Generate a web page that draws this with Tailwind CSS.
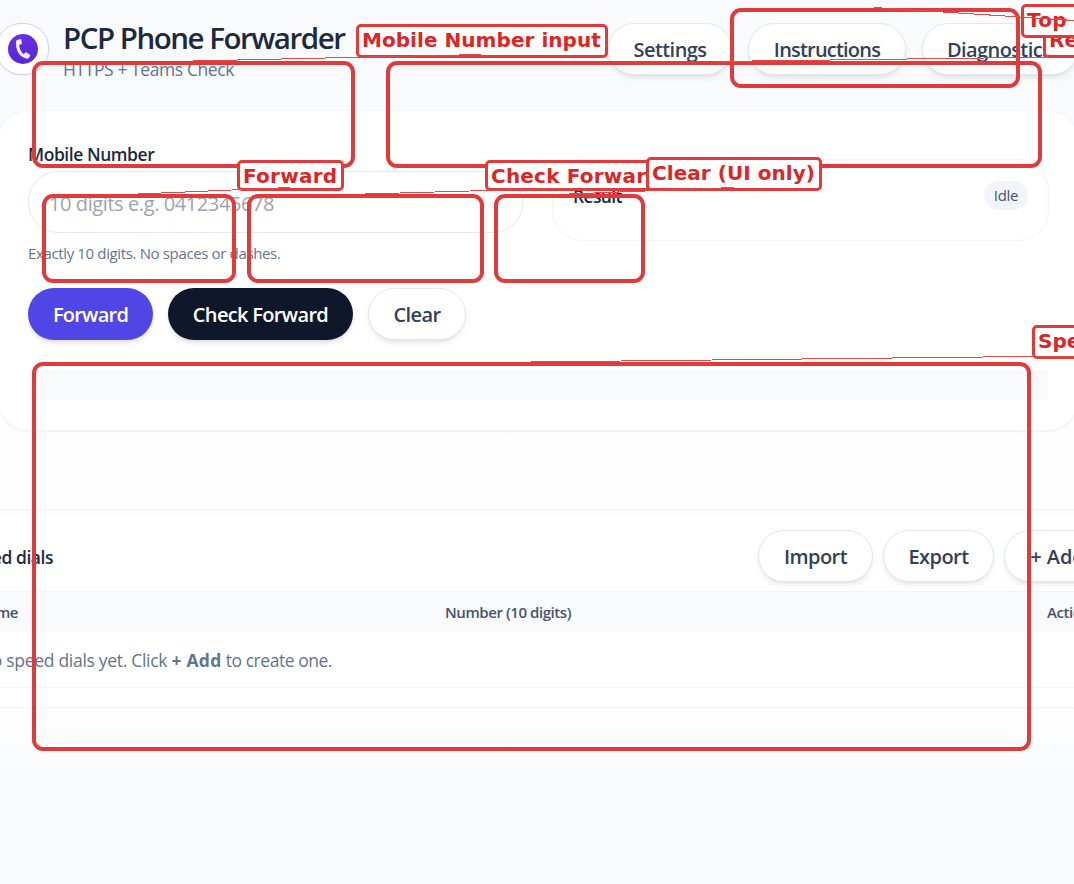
<!DOCTYPE html>
<html lang="en">
<head>
<meta charset="utf-8">
<title>PCP Phone Forwarder</title>
<script src="https://cdn.jsdelivr.net/npm/@tailwindcss/browser@4"></script>
</head>
<body class="relative h-[884px] w-[1074px] overflow-hidden bg-[linear-gradient(to_bottom,#f8fafc_0%,#f9fafc_12%,#fefefe_50%,#fefefe_76%,#fafbfd_88%)] font-['Open_Sans','Noto_Sans',sans-serif] text-slate-800">

<div class="h-full w-full overflow-hidden">
  <!-- Header -->
  <header class="-ml-1 mt-[23px] flex h-[52px] w-[1082px] justify-between">
    <div class="flex">
      <div class="flex size-[53px] h-[52px] shrink-0 items-center justify-center rounded-[25px] border border-[#c7d2fe] bg-white shadow-xs">
        <svg class="size-[30px]" viewBox="0 0 30 30">
          <defs><linearGradient id="g" x1="0" y1="0" x2="0" y2="1"><stop offset="0" stop-color="#6a30de"/><stop offset="1" stop-color="#5827d6"/></linearGradient></defs>
          <circle cx="15" cy="15" r="15" fill="url(#g)"/>
          <path d="M9.2 5.9 L12.4 5 Q13.1 4.9 13.3 5.6 L13.9 9.3 Q13.9 10 13.2 10.2 L11.2 10.8 Q11.2 16.2 15.6 20.2 L17.4 18.6 Q18 18.1 18.6 18.5 L21.9 20.8 Q22.5 21.3 22.1 21.9 L20.4 24.2 Q19.8 24.9 18.8 24.7 Q13.2 23.6 9.8 18 Q7.5 13.6 8 7.6 Q8.1 6.3 9.2 5.9 Z" fill="#f5efff"/>
        </svg>
      </div>
      <div class="ml-[14px] -mt-[5px]">
        <h1 class="pt-px text-[29.5px] leading-[37px] font-semibold tracking-[-1.47px] whitespace-nowrap">PCP Phone Forwarder</h1>
        <p class="text-[17.5px] leading-[27px] tracking-[-0.41px] text-slate-500">HTTPS + Teams Check</p>
      </div>
    </div>
    <nav class="flex gap-4 text-[20px] font-semibold text-slate-700">
      <button class="h-[52px] w-[124px] rounded-full border border-slate-200 bg-white pt-px tracking-[-0.55px] shadow-md shadow-black/8">Settings</button>
      <button class="h-[52px] w-[158px] rounded-full border border-slate-200 bg-white pt-px tracking-[-0.8px] shadow-md shadow-black/8">Instructions</button>
      <button class="h-[52px] w-[156px] rounded-full border border-slate-200 bg-white pt-px pl-[24px] text-left tracking-[-0.6px] shadow-md shadow-black/8">Diagnostics</button>
    </nav>
  </header>

  <!-- Main card -->
  <main class="-ml-[3px] mt-[35px] h-[321px] w-[1082px] rounded-[32px] border border-slate-100 bg-white p-[30px] shadow-xs">
    <div class="grid w-[1020px] grid-cols-2 items-start gap-[30px]">
      <div>
        <label class="block text-[17.5px] leading-[26px] font-semibold tracking-[-0.45px]">Mobile Number</label>
        <div class="mt-1 flex h-[62px] items-center rounded-[30px] border border-slate-200 pt-[4px] pl-[20px] text-[20px] tracking-[-0.41px] text-[#9ca3af]">10 digits e.g. 0412345678</div>
        <p class="mt-[10px] text-[15px] leading-[20px] tracking-[-0.36px] text-slate-500">Exactly 10 digits. No spaces or dashes.</p>
      </div>
      <section class="-ml-px mt-[18px] h-[82px] w-[497px] rounded-[30px] border border-slate-100 bg-white px-5 pt-[21px] inset-shadow-sm inset-shadow-black/3">
        <div class="flex h-[29px] items-center justify-between">
          <h2 class="pt-[2px] text-[17.5px] font-semibold tracking-[-0.65px]">Result</h2>
          <span class="flex h-[29px] w-[44px] items-center justify-center rounded-full bg-slate-100 text-[15px] tracking-[-0.27px] text-slate-600">Idle</span>
        </div>
      </section>
    </div>
    <div class="mt-[25px] flex gap-[15px] text-[20px] font-semibold">
      <button class="h-[52px] w-[125px] rounded-full bg-[#4f46e5] pt-px tracking-[-0.75px] text-white shadow-md shadow-black/10">Forward</button>
      <button class="h-[52px] w-[185px] rounded-full bg-slate-900 pt-px tracking-[-0.67px] text-white shadow-md shadow-black/10">Check Forward</button>
      <button class="h-[52px] w-[98px] rounded-full border border-slate-200 bg-white pt-px tracking-[-0.6px] text-slate-700 shadow-md shadow-black/8">Clear</button>
    </div>
    <div class="mt-[30px] h-[30px] w-[1020px] bg-slate-50"></div>
  </main>

  <!-- Speed dials -->
  <section class="-ml-[45px] mt-[78px] w-[1200px] border-y border-slate-100 bg-white/70 pb-[19px] inset-shadow-sm inset-shadow-black/3">
    <div class="flex h-[81px] items-center pt-[14px]">
      <h2 class="w-[98px] text-right text-[17.5px] font-semibold tracking-[-0.46px] whitespace-nowrap">Speed dials</h2>
      <div class="ml-[705px] -mt-[15px] flex gap-[10px] pt-[12px] text-[20px] font-semibold text-slate-700">
        <button class="h-[52px] w-[115px] rounded-full border border-slate-200 bg-white pt-px tracking-[-0.55px] shadow-md shadow-black/8">Import</button>
        <button class="h-[52px] w-[111px] rounded-full border border-slate-200 bg-white pt-px tracking-[-0.55px] shadow-md shadow-black/8">Export</button>
        <button class="h-[52px] w-[107px] rounded-full border border-slate-200 bg-white pt-px tracking-[-0.1px] shadow-md shadow-black/8">+ Add</button>
      </div>
    </div>
    <div class="flex h-[41px] items-center border-t border-slate-100 bg-slate-50 pt-px text-[15px] font-semibold tracking-[-0.43px] text-slate-600">
      <span class="w-[63px] text-right">Name</span>
      <span class="ml-[427px] w-[602px]">Number (10 digits)</span>
      <span>Actions</span>
    </div>
    <div class="flex h-[56px] items-center border-b border-slate-100 pt-[2px] text-[17.5px] tracking-[-0.3px] text-slate-500">
      <p class="w-[377px] text-right whitespace-nowrap">No speed dials yet. Click <b class="font-bold tracking-[0.25px]">+ Add</b> <span class="tracking-[-0.46px]">to create one.</span></p>
    </div>
  </section>
</div>

<!-- Annotation overlay -->
<div class="absolute inset-0 overflow-hidden font-['DejaVu_Sans',sans-serif] text-[20px] leading-[24px] font-bold whitespace-nowrap text-[#dc2626]">
  <div class="absolute left-[730px] top-[8px] h-[80px] w-[290px] rounded-[11px] border-4 border-[#e03a3a]"></div>
  <div class="absolute left-[32px] top-[61px] h-[107px] w-[323px] rounded-[11px] border-4 border-[#e03a3a]"></div>
  <div class="absolute left-[386px] top-[61px] h-[107px] w-[656px] rounded-[11px] border-4 border-[#e03a3a]"></div>
  <div class="absolute left-[42px] top-[194px] h-[89px] w-[194px] rounded-[11px] border-4 border-[#e03a3a]"></div>
  <div class="absolute left-[247px] top-[194px] h-[89px] w-[237px] rounded-[11px] border-4 border-[#e03a3a]"></div>
  <div class="absolute left-[494px] top-[194px] h-[89px] w-[151px] rounded-[11px] border-4 border-[#e03a3a]"></div>
  <div class="absolute left-[32px] top-[362px] h-[389px] w-[999px] rounded-[11px] border-4 border-[#e03a3a]"></div>

  <div class="absolute left-[356px] top-[24px] h-[34px] w-[252px] rounded-[5px] border-3 border-[#e03a3a] bg-white pl-[3px] pt-px tracking-[0.05px]">Mobile Number input</div>
  <div class="absolute left-[1043px] top-[24px] h-[34px] w-[90px] rounded-[5px] border-3 border-[#e03a3a] bg-white pl-[3px] pt-px">Result</div>
  <div class="absolute left-[1021px] top-[4px] h-[34px] w-[170px] rounded-[5px] border-3 border-[#e03a3a] bg-white pl-[3px] pt-px tracking-[0.3px]">Top buttons</div>
  <div class="absolute left-[237px] top-[160px] h-[31px] w-[107px] rounded-[5px] border-3 border-[#e03a3a] bg-white pl-[3px] pt-px tracking-[0.25px]">Forward</div>
  <div class="absolute left-[485px] top-[160px] h-[31px] w-[180px] rounded-[5px] border-3 border-[#e03a3a] bg-white pl-[3px] pt-px tracking-[0.2px]">Check Forward</div>
  <div class="absolute left-[646px] top-[157px] h-[34px] w-[176px] rounded-[5px] border-3 border-[#e03a3a] bg-white pl-[3px] pt-px tracking-[0.05px]">Clear (UI only)</div>
  <div class="absolute left-[1032px] top-[325px] h-[34px] w-[140px] rounded-[5px] border-3 border-[#e03a3a] bg-white pl-[3px] pt-px">Speed dials</div>

  <svg class="absolute inset-0" width="1074" height="884" fill="none" stroke="#e24a4a" stroke-width="1" shape-rendering="crispEdges">
    <path d="M193 61 L481 54.5 M874 7.5 L1074 20.5 M714 61.5 L1046 57.2 M138 194 L290 187.5 M365 194 L575 188 M569 194 L734 187.5 M531 362 L1074 356"/>
  </svg>
</div>
</body>
</html>
